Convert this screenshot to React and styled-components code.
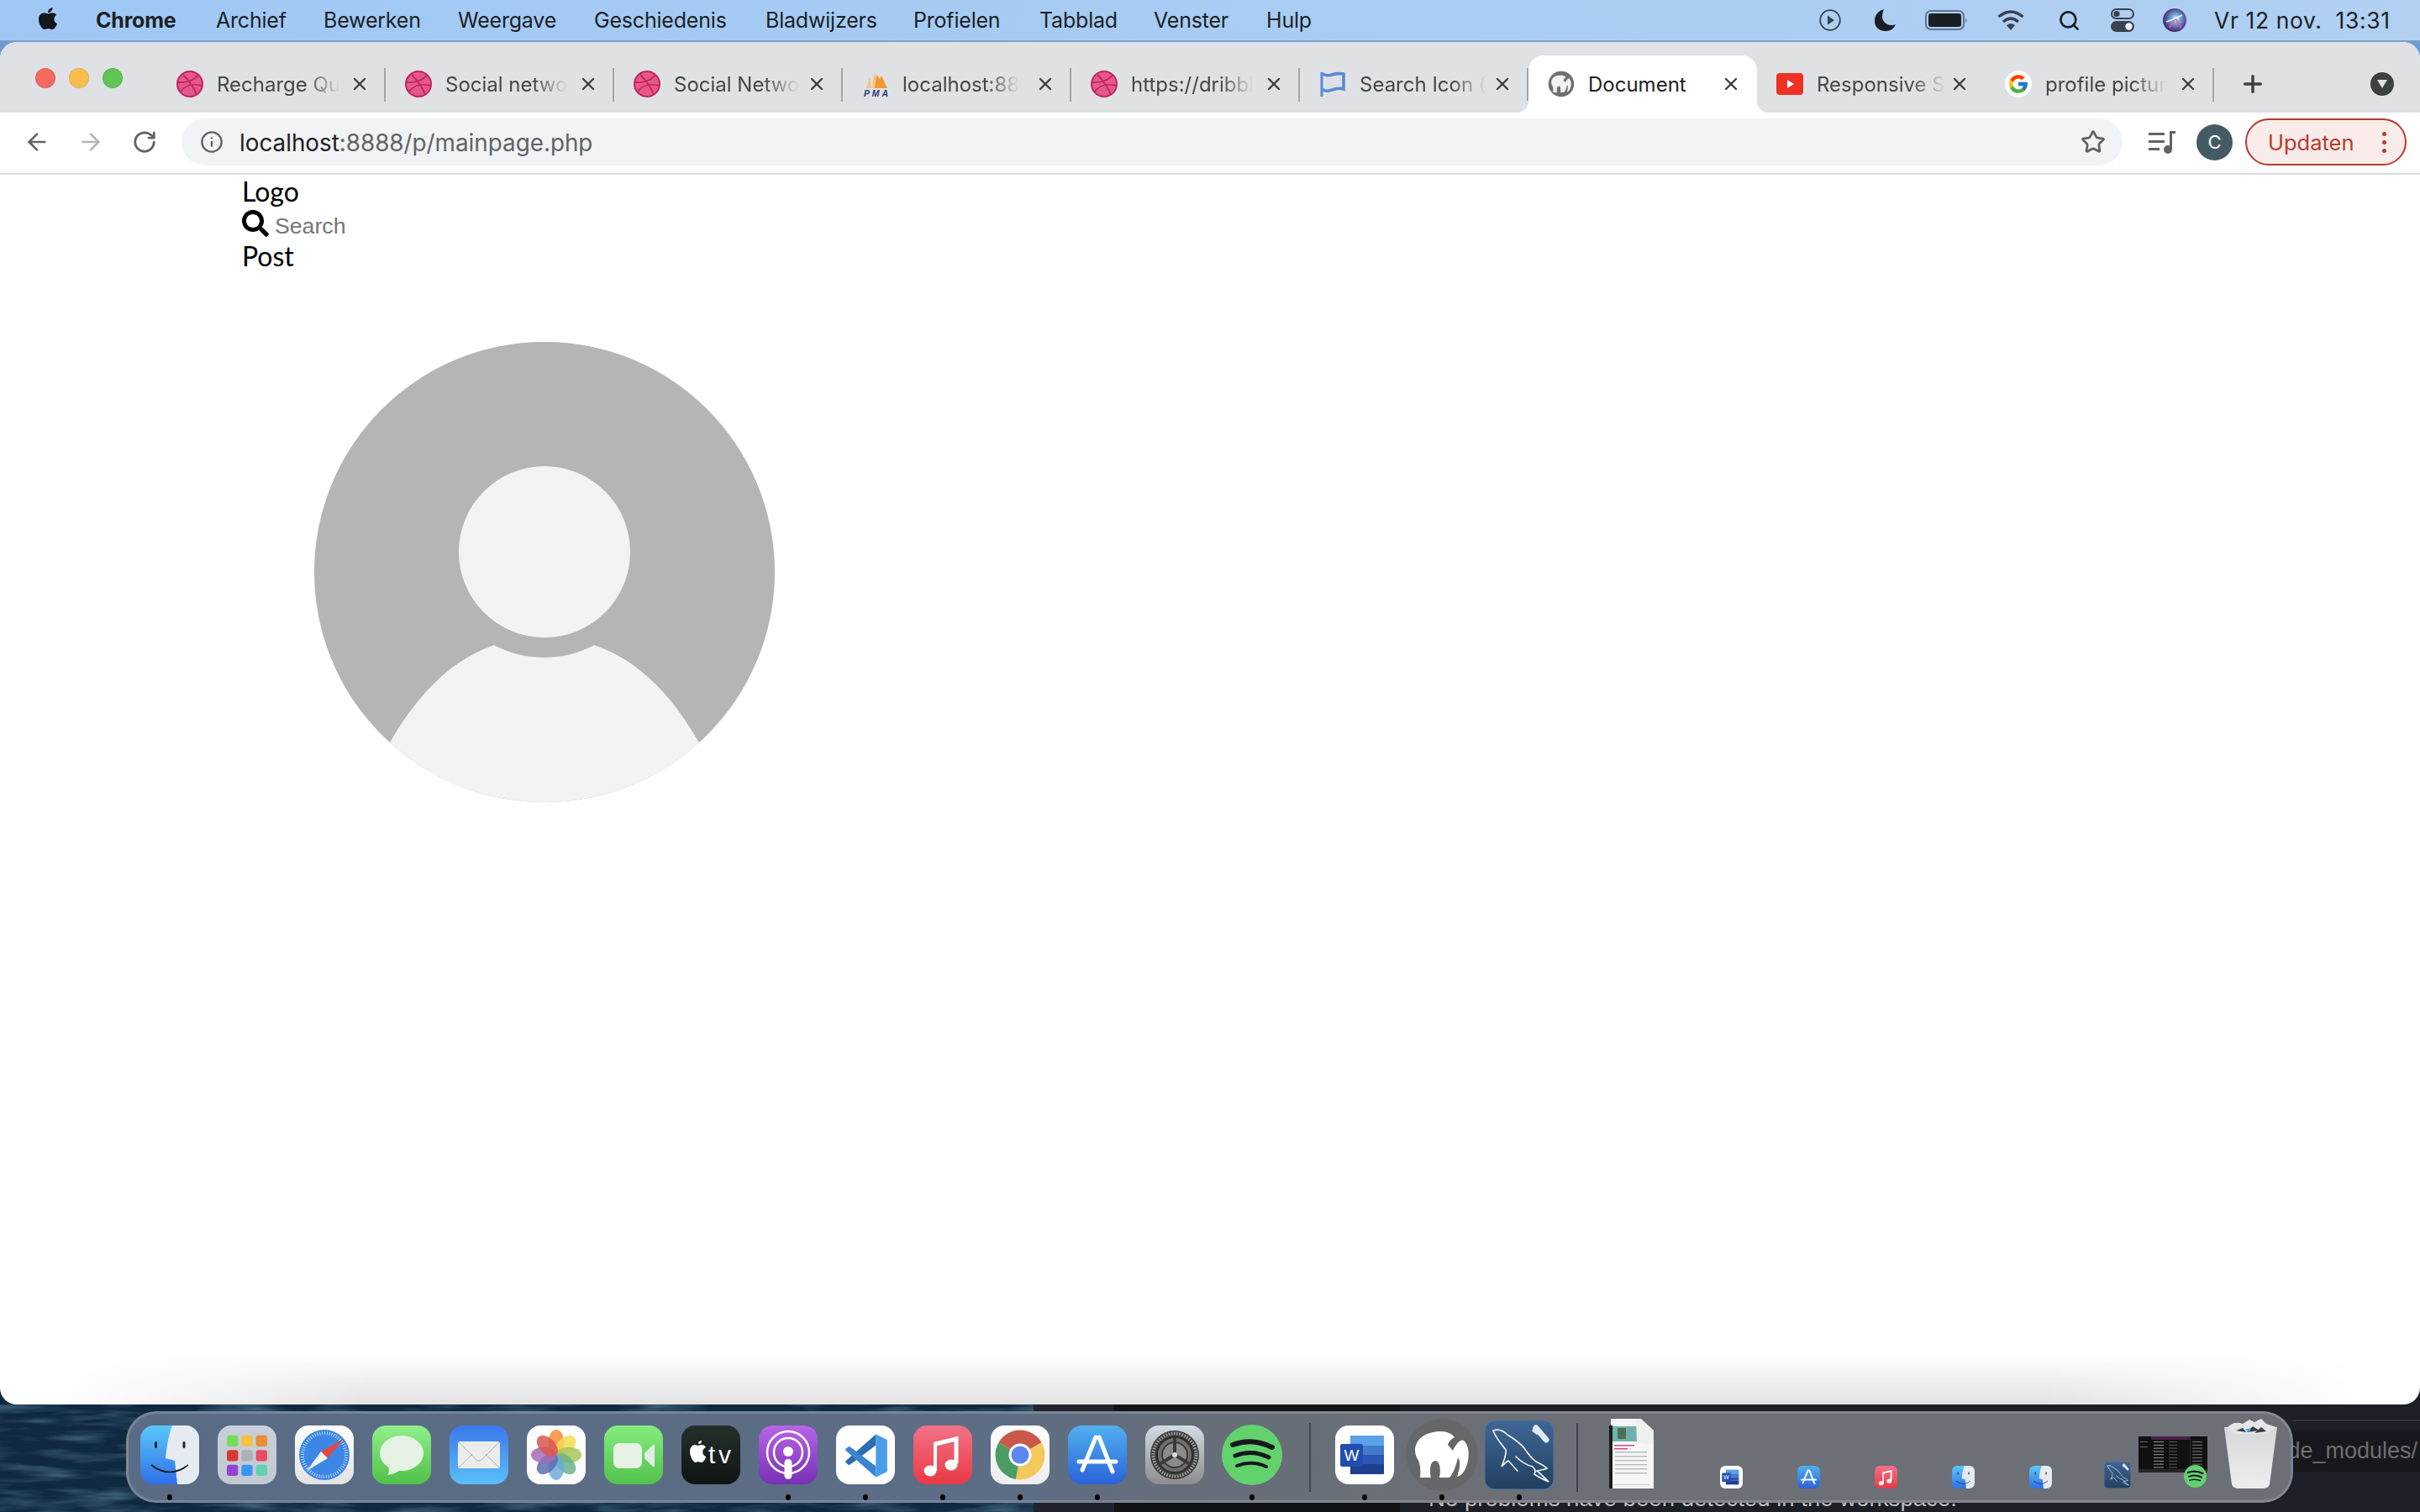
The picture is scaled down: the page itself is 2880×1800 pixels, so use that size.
import React from "react";
import styled, { createGlobalStyle } from "styled-components";
import { ArrowLeft, ArrowRight, RotateCw, Info, Star, Plus, X, Search as SearchGlass } from "lucide-react";
import { FaSearch, FaApple } from "react-icons/fa";
import { FcGoogle } from "react-icons/fc";

const Global = createGlobalStyle`
  html, body { margin: 0; padding: 0; background: #1d1f26; overflow: hidden; }
  * { box-sizing: border-box; }
`;

const SYS = `Inter, "Liberation Sans", sans-serif`;

const Desktop = styled.div`
  position: relative;
  width: 2880px;
  height: 1800px;
  overflow: hidden;
  display: flex;
  flex-direction: column;
  font-family: ${SYS};
  background:
    linear-gradient(#6d9bd3 0 100px, transparent 100px),
    linear-gradient(90deg, #0f2940 0 1230px, #20232b 1230px 1326px, #121317 1326px 1666px, #1d1f26 1666px);
`;
const SeaTexture = styled.svg`
  position: absolute;
  left: 0;
  bottom: 0;
  width: 1230px;
  height: 128px;
`;
const EditorLine = styled.div`
  position: absolute;
  left: 2729px;
  right: 0;
  top: 1690px;
  height: 2px;
  background: #32343b;
`;
const EditorPath = styled.div`
  position: absolute;
  right: 0;
  top: 1703px;
  width: 420px;
  height: 49px;
  background: #17181d;
  color: #6e6e6e;
  font: 27px/49px "Liberation Sans", sans-serif;
  text-align: right;
  padding-right: 3px;
  white-space: nowrap;
`;
const ProblemsText = styled.div`
  position: absolute;
  left: 1700px;
  top: 1769px;
  color: #bdbdbd;
  font: 27.6px/30px "Liberation Sans", sans-serif;
  white-space: nowrap;
`;

const MenuBar = styled.header`
  position: relative;
  height: 50px;
  flex: none;
  display: flex;
  align-items: center;
  padding-left: 44px;
  background: linear-gradient(90deg, #9fc8f4, #b1d0f2);
  border-bottom: 2px solid #7ba0cc;
  color: #1b1f25;
  font-size: 25px;
  letter-spacing: -0.2px;
`;
const AppleMark = styled.span`
  display: flex;
  width: 26px;
  margin-right: 44px;
  margin-top: -4px;
  svg { display: block; }
`;
const MenuItem = styled.span`
  font-weight: ${(p) => (p.$bold ? 700 : 400)};
  width: ${(p) => p.$w}px;
  white-space: nowrap;
`;
const StatusArea = styled.div`
  margin-left: auto;
  display: flex;
  align-items: center;
  height: 100%;
`;
const StatusSlot = styled.span`
  width: ${(p) => p.$w}px;
  display: flex;
  justify-content: center;
  align-items: center;
`;
const Clock = styled.span`
  width: 260px;
  padding-left: 15px;
  white-space: pre;
  font-size: 26.5px;
  letter-spacing: 0.6px;
`;

const BrowserWindow = styled.main`
  position: relative;
  height: 1622px;
  flex: none;
  display: flex;
  flex-direction: column;
  background: #fff;
  border-radius: 20px;
  overflow: hidden;
  &::after {
    content: "";
    position: absolute;
    left: 60px;
    right: 60px;
    bottom: 0;
    height: 62px;
    pointer-events: none;
    background: linear-gradient(transparent, rgba(0, 0, 0, 0.115));
    -webkit-mask-image: linear-gradient(90deg, transparent, #000 14%, #000 86%, transparent);
    mask-image: linear-gradient(90deg, transparent, #000 14%, #000 86%, transparent);
  }
`;
const TabStrip = styled.div`
  height: 84px;
  flex: none;
  background: #dfe1e5;
  display: flex;
  align-items: flex-end;
  padding-left: 42px;
`;
const Lights = styled.div`
  display: flex;
  gap: 16px;
  align-self: flex-start;
  margin: 31px 41px 0 0;
`;
const Light = styled.span`
  width: 24px;
  height: 24px;
  border-radius: 50%;
  background: ${(p) => p.$c};
  box-shadow: inset 0 0 0 1px rgba(0, 0, 0, 0.08);
`;
const Tab = styled.div`
  position: relative;
  width: 272px;
  height: 68px;
  flex: none;
  display: flex;
  align-items: center;
  padding-left: 23px;
  color: ${(p) => (p.$active ? "#202124" : "#45474a")};
  background: ${(p) => (p.$active ? "#fff" : "transparent")};
  border-radius: ${(p) => (p.$active ? "18px 18px 0 0" : "0")};
  ${(p) =>
    p.$sep &&
    `&::after {
      content: "";
      position: absolute;
      right: 0;
      top: 15px;
      width: 2px;
      height: 40px;
      background: #a3a5a9;
    }`}
  ${(p) =>
    p.$active &&
    `&::before, &::after {
      content: "";
      position: absolute;
      bottom: 0;
      width: 14px;
      height: 14px;
    }
    &::before {
      left: -14px;
      background: radial-gradient(circle at 0 0, #dfe1e5 14px, #fff 14.5px);
    }
    &::after {
      right: -14px;
      background: radial-gradient(circle at 100% 0, #dfe1e5 14px, #fff 14.5px);
    }`}
`;
const Favicon = styled.span`
  width: 32px;
  height: 32px;
  flex: none;
  display: flex;
  align-items: center;
  justify-content: center;
  svg { display: block; }
`;
const TabTitle = styled.span`
  margin: 0 0 0 16px;
  white-space: nowrap;
  font-size: 24px;
  -webkit-mask-image: ${(p) => (p.$fade ? "linear-gradient(90deg, #000 72%, transparent 100%)" : "none")};
  mask-image: ${(p) => (p.$fade ? "linear-gradient(90deg, #000 72%, transparent 100%)" : "none")};
`;
const TabClose = styled.span`
  position: absolute;
  left: 229px;
  top: 22px;
  width: 24px;
  height: 24px;
  color: #3c4043;
  svg { display: block; }
`;
const NewTab = styled.span`
  height: 68px;
  display: flex;
  align-items: center;
  margin-left: 30px;
  color: #3c4043;
`;
const TabSearch = styled.span`
  width: 28px;
  height: 28px;
  border-radius: 50%;
  background: #3c4043;
  margin: 0 31px 20px auto;
  display: flex;
  align-items: center;
  justify-content: center;
`;

const Toolbar = styled.nav`
  height: 74px;
  flex: none;
  display: flex;
  align-items: center;
  padding: 0 15px 2px 12px;
  background: #fff;
  border-bottom: 2px solid #dadce0;
`;
const NavButton = styled.span`
  width: 64px;
  display: flex;
  justify-content: center;
  color: ${(p) => (p.$off ? "#b5b7ba" : "#5f6368")};
`;
const Omnibox = styled.div`
  width: 2310px;
  height: 56px;
  margin-left: 12px;
  flex: none;
  display: flex;
  align-items: center;
  padding: 0 20px 0 22px;
  border-radius: 28px;
  background: #f1f3f4;
  color: #5f6368;
  font-size: 27.8px;
  svg { flex: none; }
`;
const UrlText = styled.span`
  margin-left: 19px;
  padding-top: 2px;
  flex: 1;
  b { font-weight: 400; color: #202124; }
`;
const MediaButton = styled.span`
  width: 46px;
  margin-left: 24px;
  display: flex;
  justify-content: center;
`;
const ProfileBadge = styled.span`
  width: 43px;
  height: 43px;
  margin-left: 18px;
  border-radius: 50%;
  background: #455a64;
  color: #fff;
  font-size: 22px;
  display: flex;
  align-items: center;
  justify-content: center;
`;
const UpdatePill = styled.span`
  width: 192px;
  height: 56px;
  margin-left: 15px;
  border: 2px solid #b93a2c;
  border-radius: 28px;
  background: #f9ecea;
  color: #b93a2c;
  font-size: 25.5px;
  display: flex;
  align-items: center;
  justify-content: space-between;
  padding: 0 22px 0 25px;
`;
const Kebab = styled.span`
  display: flex;
  flex-direction: column;
  gap: 5px;
  i { width: 5px; height: 5px; border-radius: 50%; background: #b93a2c; display: block; }
`;

const Page = styled.section`
  flex: 1;
  padding-left: 288px;
  font-family: Lato, sans-serif;
  font-size: 32px;
  line-height: 39px;
  color: #000;
`;
const SearchRow = styled.div`
  height: 38px;
  display: flex;
  align-items: center;
  gap: 7px;
`;
const SearchHint = styled.span`
  font: 26.67px/30px "Liberation Sans", sans-serif;
  color: #757575;
  margin-top: 6px;
`;
const Avatar = styled.svg`
  display: block;
  width: 600px;
  height: 600px;
  margin: 56px 0 0 60px;
`;

const Dock = styled.footer`
  position: relative;
  width: 2579px;
  height: 109px;
  margin: 8px 0 0 150px;
  padding: 14px 0 0 3px;
  display: flex;
  border: 3px solid rgba(255, 255, 255, 0.17);
  border-radius: 36px;
  background: linear-gradient(90deg, #5a6c85 0, #5c6d85 1030px, #666e7a 1260px, #6c6f76 1600px, #6c6f76 100%);
`;
const DockSlot = styled.div`
  position: relative;
  width: ${(p) => p.$w || 92}px;
  margin-right: ${(p) => p.$mr || 0}px;
  margin-left: ${(p) => p.$ml || 0}px;
  flex: none;
  display: flex;
  flex-direction: column;
  align-items: center;
`;
const IconWell = styled.div`
  height: ${(p) => (p.$tall ? 75 : 70)}px;
  display: flex;
  align-items: ${(p) => (p.$tall ? "flex-end" : "center")};
  justify-content: center;
  svg { display: block; flex: none; }
`;
const RunDot = styled.i`
  display: block;
  width: 6px;
  height: 7px;
  margin-top: 12px;
  border-radius: 50%;
  background: #000;
`;
const DockRule = styled.div`
  width: 42px;
  flex: none;
  display: flex;
  justify-content: center;
  padding-left: 4px;
  &::before {
    content: "";
    width: 2px;
    height: 82px;
    background: #3f434c;
    margin-top: -3px;
  }
`;
const MiniWindow = styled.svg`
  position: absolute;
  left: -21px;
  top: 13px;
  width: 82px;
  height: 43px;
`;

const Squircle = ({ id, from, to, size = 70, children, fill }) => (
  <svg width={size} height={size} viewBox="0 0 70 70">
    <defs>
      <linearGradient id={id} x1="0" y1="0" x2="0" y2="1">
        <stop offset="0" stopColor={from} />
        <stop offset="1" stopColor={to} />
      </linearGradient>
    </defs>
    <rect width="70" height="70" rx="16" fill={fill || `url(#${id})`} />
    {children}
  </svg>
);

const Finder = ({ size, id = "fi" }) => (
  <Squircle id={id} from="#5ac8fa" to="#2f6fe8" size={size}>
    <path d="M38 0H54a16 16 0 0 1 16 16V54a16 16 0 0 1-16 16H44L41 42 30 39Q32 16 38 0Z" fill="#e6eaf1" />
    <rect x="17" y="19" width="3" height="8" rx="1.5" fill="#20262f" />
    <rect x="50.5" y="19" width="3" height="8" rx="1.5" fill="#20262f" />
    <path d="M13 47Q35 64 57 47" stroke="#15181d" strokeWidth="1.6" fill="none" />
  </Squircle>
);
const Launchpad = () => {
  const c = ["#75dc59", "#f6c241", "#e88e35", "#d63b2f", "#aab2b8", "#ea4c63", "#9345d2", "#3b94f5", "#64d1ae"];
  return (
    <Squircle id="lp" from="#c8cfd9" to="#c2c9d3">
      {c.map((f, i) => (
        <rect key={f} x={11 + (i % 3) * 17.3} y={11.7 + Math.floor(i / 3) * 17.5} width="13.4" height="13.4" rx="3" fill={f} />
      ))}
    </Squircle>
  );
};
const Safari = () => (
  <Squircle id="sa" from="#ffffff" to="#e2e2e2">
    <circle cx="35" cy="35" r="30" fill="#3c87e6" />
    <circle cx="35" cy="35" r="26" fill="none" stroke="#dfeeff" strokeWidth="4" strokeDasharray="0.8 2.1" />
    <polygon points="58,16 31,31 39,39" fill="#e5483a" />
    <polygon points="14,54 31,31 39,39" fill="#f4f4f4" />
  </Squircle>
);
const Messages = () => (
  <Squircle id="me" from="#8ff08a" to="#50c148">
    <ellipse cx="35" cy="33" rx="26" ry="21" fill="#e6f2e4" />
    <path d="M19 48Q21 56 18 59Q27 58 33 53Z" fill="#e6f2e4" />
  </Squircle>
);
const Mail = () => (
  <Squircle id="ma" from="#3a78ec" to="#5ac0f9">
    <rect x="10" y="19" width="50" height="32" rx="2.5" fill="#ececec" />
    <path d="M11 20 32 41Q35 43 38 41L59 20M11 50 27 34M59 50 43 34" fill="none" stroke="#b4b4b4" strokeWidth="1" />
  </Squircle>
);
const Photos = () => {
  const c = ["#ee8f38", "#f5dc55", "#a9c75a", "#6bb38a", "#6fa9db", "#5e6cb0", "#a66ab5", "#d9564f"];
  return (
    <Squircle id="ph" from="#ffffff" to="#fbfbfb">
      {c.map((f, i) => (
        <ellipse key={f} cx="35" cy="20" rx="9.5" ry="15" fill={f} opacity="0.85" transform={`rotate(${i * 45} 35 35)`} />
      ))}
    </Squircle>
  );
};
const FaceTime = () => (
  <Squircle id="ft" from="#86ec7f" to="#52c24a">
    <rect x="11" y="21" width="34" height="30" rx="7" fill="#e8f1e6" />
    <path d="M48 33 58 23Q60 22 60 25V47Q60 50 58 49L48 39Z" fill="#e0ede0" />
  </Squircle>
);
const AppleTv = () => (
  <Squircle id="tv" from="#24302c" to="#101413">
    <path d="M20 22c2 0 4-1 4-4-2 0-4 1-4 4zm4 1c-2 0-3 1-4 1-1 0-3-1-4-1-3 0-6 3-6 8 0 6 4 13 7 13 1 0 2-1 3-1s2 1 4 1c2 0 5-5 5-7-5-2-5-9 0-11-1-2-3-3-5-3z" fill="#fff" />
    <text x="32" y="45" fill="#fff" fontFamily="Liberation Sans, sans-serif" fontSize="30" textLength="27">tv</text>
  </Squircle>
);
const Podcasts = () => (
  <Squircle id="po" from="#b765e8" to="#7630b6">
    <circle cx="35" cy="32" r="25" fill="none" stroke="#fff" strokeWidth="2.5" />
    <circle cx="35" cy="32" r="17" fill="none" stroke="#fff" strokeWidth="2.5" />
    <circle cx="35" cy="31" r="6" fill="#fff" />
    <rect x="30.5" y="40" width="9" height="24" rx="4.5" fill="#fff" />
  </Squircle>
);
const VSCode = () => (
  <Squircle id="vs" fill="#fff" from="#fff" to="#fff">
    <g transform="translate(9 9) scale(0.54)">
      <polygon points="71,3 71,27 21,65 12,71 4,65 4,62" fill="#2b6cb3" />
      <polygon points="71,97 71,73 21,35 12,29 4,35 4,38" fill="#3a84d2" />
      <polygon points="71,3 96,15 96,85 71,97" fill="#4a9bea" />
    </g>
  </Squircle>
);
const Music = ({ size, id = "mu" }) => (
  <Squircle id={id} from="#f27289" to="#e93a44" size={size}>
    <path d="M26 22 51 16V45" fill="none" stroke="#fff" strokeWidth="5" />
    <path d="M26 20V54" stroke="#fff" strokeWidth="4" />
    <ellipse cx="20" cy="54" rx="7.5" ry="6.5" fill="#fff" />
    <ellipse cx="45" cy="47" rx="7.5" ry="6.5" fill="#fff" />
  </Squircle>
);
const ChromeApp = () => (
  <Squircle id="ch" from="#ffffff" to="#eeeeee">
    <path d="M35 35 9.5 20.2A29.5 29.5 0 0 1 60.5 20.2Z" fill="#c9594a" />
    <path d="M35 35 60.5 20.2A29.5 29.5 0 0 1 30 64Z" fill="#f4c95c" />
    <path d="M35 35 30 64A29.5 29.5 0 0 1 9.5 20.2Z" fill="#4b9d63" />
    <circle cx="35" cy="35" r="13.5" fill="#fff" />
    <circle cx="35" cy="35" r="10.5" fill="#5d87ee" />
  </Squircle>
);
const AppStore = ({ size, id = "as" }) => (
  <Squircle id={id} from="#52b0f0" to="#2a62d8" size={size}>
    <g stroke="#fff" strokeLinecap="round" fill="none">
      <path d="M33 14 17 53M37 14 53 55" strokeWidth="5" />
      <path d="M13 43H57" strokeWidth="5" />
    </g>
  </Squircle>
);
const Settings = () => (
  <Squircle id="se" from="#d0dde3" to="#8c8c8c">
    <circle cx="35" cy="35" r="29" fill="#3a3a3a" />
    <circle cx="35" cy="35" r="25.5" fill="none" stroke="#a2a2a2" strokeWidth="4" strokeDasharray="1.6 1.6" />
    <circle cx="35" cy="35" r="21" fill="#6e6e6e" stroke="#2e2e2e" strokeWidth="2" />
    <circle cx="35" cy="35" r="15" fill="#8b8b8b" stroke="#3a3a3a" strokeWidth="2" />
    <path d="M35 35V15M35 35 17 46M35 35 53 46" stroke="#3a3a3a" strokeWidth="4" />
    <circle cx="35" cy="35" r="3" fill="#ddd" />
  </Squircle>
);
const Spotify = ({ size = 72 }) => (
  <svg width={size} height={size} viewBox="0 0 72 72">
    <circle cx="36" cy="36" r="36" fill="#62d26f" />
    <g fill="none" stroke="#15181a" strokeLinecap="round">
      <path d="M13 24Q36 15 60 27" strokeWidth="6" />
      <path d="M16 37Q36 29 56 39" strokeWidth="5" />
      <path d="M18 49Q36 42 53 50" strokeWidth="4" />
    </g>
  </svg>
);
const Word = ({ size }) => (
  <Squircle id={`wd${size || 70}`} fill="#fff" from="#fff" to="#fff" size={size}>
    <rect x="18" y="12" width="40" height="12" fill="#5ba0e8" />
    <rect x="18" y="24" width="40" height="11" fill="#4179cf" />
    <rect x="18" y="35" width="40" height="11" fill="#2a57b3" />
    <rect x="18" y="46" width="40" height="12" fill="#1f3f8f" />
    <rect x="6" y="22" width="27" height="27" rx="2" fill="#1f4eb0" />
    <text x="19.5" y="42" fill="#fff" fontFamily="Liberation Sans, sans-serif" fontSize="19" textAnchor="middle">W</text>
  </Squircle>
);
const Elephant = ({ fill = "#fff" }) => (
  <path
    fill={fill}
    d="M11 38C11 24 24 15 42 15C49 15 55 18 58 22C54 24 51 27 50 31C52 33 54 36 56 38C60 30 65 24 69 26C74 30 76 40 74 50C72 60 67 68 61 69C64 60 66 52 62 46C60 56 56 66 52 70L40 70C42 62 41 50 35 50C29 50 28 62 30 70L17 70C18 62 17 52 14 48C12 44 11 41 11 38Z"
  />
);
const Mamp = () => (
  <svg width="86" height="86" viewBox="0 0 86 86">
    <circle cx="43" cy="43" r="43" fill="#666768" />
    <Elephant />
  </svg>
);
const Workbench = ({ size = 84, id = "wb" }) => (
  <svg width={size} height={size} viewBox="0 0 84 84">
    <defs>
      <linearGradient id={id} x1="0" y1="0" x2="0" y2="1">
        <stop offset="0" stopColor="#3f6795" />
        <stop offset="1" stopColor="#22405f" />
      </linearGradient>
    </defs>
    <rect x="1" y="1" width="82" height="82" rx="12" fill={`url(#${id})`} stroke="#4f77a5" />
    <g fill="none" stroke="#eaf2fa" strokeWidth="1.7" strokeLinecap="round">
      <path d="M11 13C17 11 23 13 28 18C36 23 43 28 48 34C52 40 56 46 62 50C68 53 72 55 75 58C71 60 67 60 63 61C68 65 72 69 77 74C72 72 66 69 60 65C62 62 61 59 58 56C50 54 44 50 38 44" />
      <path d="M11 13C14 22 21 29 26 36C27 42 24 48 21 56C24 53 27 50 29 49C33 53 36 57 40 61" />
    </g>
    <path d="M62 10 74 24" stroke="#dfeaf5" strokeWidth="7" strokeLinecap="round" />
    <path d="M62 7 59 13 64 17" fill="none" stroke="#dfeaf5" strokeWidth="3" />
  </svg>
);
const DocThumb = () => (
  <svg width="55" height="83" viewBox="0 0 55 83">
    <path d="M2 0H36L53 16V83H2Z" fill="#f6f6f6" />
    <rect x="0" y="8" width="4" height="75" fill="#1b1b1b" />
    <rect x="4" y="9" width="45" height="18" fill="#6eb2ad" />
    <rect x="10" y="11" width="10" height="13" fill="#4d6f55" />
    <path d="M32 0 38 0 53 14V30Q44 31 33 28Z" fill="#eef0ee" />
    <rect x="6" y="31" width="24" height="1.5" fill="#d1478c" />
    <rect x="6" y="35" width="16" height="1.5" fill="#d1478c" />
    {[39, 44, 49, 54, 59, 64].map((y) => (
      <rect key={y} x="7" y={y} width="38" height="1.5" fill="#b7bcc2" />
    ))}
    <rect x="6" y="78" width="42" height="1" fill="#c9c9c9" />
  </svg>
);
const Trash = () => (
  <svg width="63" height="83" viewBox="0 0 63 83">
    <defs>
      <linearGradient id="tr" x1="0" y1="0" x2="0" y2="1">
        <stop offset="0" stopColor="#d6d7d9" />
        <stop offset="1" stopColor="#eeeeee" />
      </linearGradient>
    </defs>
    <path d="M0 10 63 10 54 78Q53 83 45 83H18Q10 83 9 78Z" fill="url(#tr)" />
    <path d="M4 10Q12 2 22 6L30 1 36 4 44 0 50 6 62 10 50 18H10Z" fill="#e6e6e6" />
    <path d="M14 14 22 11 26 16ZM27 16 34 9 42 14ZM36 17 44 10 50 15Z" fill="#38404c" />
    <path d="M24 13 32 11 30 16Z" fill="#4fb0d8" />
  </svg>
);
const MiniSpotify = styled.span`
  position: absolute;
  left: 33px;
  top: 47px;
  width: 27px;
  height: 27px;
  svg { display: block; }
`;
const Thumb = () => (
  <MiniWindow viewBox="0 0 82 43">
    <rect width="82" height="43" fill="#111" />
    <rect x="15" width="47" height="4" fill="#4a1f46" />
    <rect x="61" width="1" height="43" fill="#2a2a2a" />
    {Array.from({ length: 9 }).map((_, i) => (
      <g key={i}>
        <rect x="18" y={6 + i * 3.8} width="12" height="1" fill="#9a9a9a" />
        <rect x="36" y={6 + i * 3.8} width="10" height="1" fill="#555" />
        <rect x="64" y={6 + i * 3.8} width="12" height="1" fill="#777" />
      </g>
    ))}
    <rect x="2" y="6" width="9" height="1" fill="#666" />
    <rect x="2" y="12" width="9" height="1" fill="#666" />
    <rect x="0" y="39" width="82" height="4" fill="#262626" />
  </MiniWindow>
);

const Dribbble = () => (
  <svg width="32" height="32" viewBox="0 0 32 32">
    <circle cx="16" cy="16" r="15" fill="#e4598a" stroke="#c32361" strokeWidth="2" />
    <path d="M8 5C14 11 21 20 24 29M2 14C11 15 21 12 26 5M5 25C10 18 19 15 30 18" fill="none" stroke="#c32361" strokeWidth="1.8" />
  </svg>
);
const Pma = () => (
  <svg width="32" height="32" viewBox="0 0 32 32">
    <path d="M5 21 9 8 11 21ZM12 21 15 0 19 21Z" fill="#f8c37c" />
    <path d="M15 21 17 5 21 10 23 6 30 21Z" fill="#f29a2e" />
    <text x="2" y="31" fill="#2b3a75" fontFamily="Liberation Sans, sans-serif" fontStyle="italic" fontWeight="700" fontSize="10.5" textLength="29">PMA</text>
  </svg>
);
const FlagIcon = () => (
  <svg width="32" height="32" viewBox="0 0 32 32">
    <path d="M3 2V31" stroke="#5b8ad6" strokeWidth="3" fill="none" />
    <path d="M4 4Q9 7 15 5T29 4V22Q23 20 15 23T4 22" fill="none" stroke="#5b8ad6" strokeWidth="3.6" />
  </svg>
);
const MampFav = () => (
  <svg width="32" height="32" viewBox="0 0 86 86">
    <circle cx="43" cy="43" r="41" fill="#6e6f70" />
    <Elephant fill="#f1f1f1" />
  </svg>
);
const YouTube = () => (
  <svg width="32" height="32" viewBox="0 0 32 32">
    <rect x="0" y="3" width="32" height="26" rx="4" fill="#ef3124" />
    <path d="M13 11 21 16 13 21Z" fill="#fff" />
  </svg>
);
const GoogleFav = () => (
  <svg width="32" height="32" viewBox="0 0 32 32">
    <circle cx="16" cy="16" r="16" fill="#fff" />
    <g transform="translate(3 3)"><FcGoogle size={26} /></g>
  </svg>
);

const PlayStatus = () => (
  <svg width="26" height="26" viewBox="0 0 26 26">
    <circle cx="13" cy="13" r="11.8" fill="none" stroke="#39424d" strokeWidth="1.8" />
    <path d="M10 7.5 18 13 10 18.5Z" fill="#39424d" />
  </svg>
);
const Moon = () => (
  <svg width="26" height="28" viewBox="0 0 26 28">
    <path d="M11 1C4 3 0 8 0 15 0 23 6 27 13 27 19 27 23 24 25 19 17 22 9 17 9 10 9 7 10 3 11 1Z" fill="#1a1e23" />
  </svg>
);
const Battery = () => (
  <svg width="52" height="24" viewBox="0 0 52 24">
    <rect x="1" y="1" width="45" height="22" rx="6" fill="none" stroke="#5e7690" strokeWidth="2" />
    <rect x="4" y="4" width="39" height="16" rx="3" fill="#1a1e23" />
    <path d="M48 9Q51 12 48 15Z" fill="#5e7690" />
  </svg>
);
const Wifi = () => (
  <svg width="32" height="26" viewBox="0 0 32 26">
    <g fill="none" stroke="#39424d" strokeWidth="3.2">
      <path d="M1.5 9Q16 -3 30.5 9" />
      <path d="M7 15Q16 7 25 15" />
    </g>
    <path d="M11 19Q16 15 21 19L16 25Z" fill="#39424d" />
  </svg>
);
const ControlCenter = () => (
  <svg width="28" height="28" viewBox="0 0 28 28">
    <rect x="1" y="1" width="26" height="11" rx="5.5" fill="none" stroke="#39424d" strokeWidth="2" />
    <circle cx="7" cy="6.5" r="3.6" fill="#39424d" />
    <rect x="0" y="15" width="28" height="13" rx="6.5" fill="#39424d" />
    <circle cx="21.5" cy="21.5" r="4.2" fill="#eaf1f8" />
  </svg>
);
const Siri = () => (
  <svg width="28" height="28" viewBox="0 0 28 28">
    <defs>
      <radialGradient id="si" cx="0.55" cy="0.45" r="0.6">
        <stop offset="0" stopColor="#ffffff" />
        <stop offset="0.3" stopColor="#6fb2d8" />
        <stop offset="0.7" stopColor="#5b4a9b" />
        <stop offset="1" stopColor="#2f2a52" />
      </radialGradient>
    </defs>
    <circle cx="14" cy="14" r="14" fill="url(#si)" />
    <path d="M15 12 8 23M15 12 22 23" stroke="#e8589c" strokeWidth="1.6" />
    <path d="M15 12 23 8M15 12 4 16" stroke="#e9f6ff" strokeWidth="1.4" />
  </svg>
);
const MediaQueue = () => (
  <svg width="32" height="28" viewBox="0 0 32 28">
    <g fill="#5f6368">
      <rect x="0" y="3" width="19" height="3" />
      <rect x="0" y="12" width="19" height="3" />
      <rect x="0" y="21" width="13" height="3" />
      <rect x="25" y="1" width="3" height="22" />
      <rect x="25" y="1" width="7" height="3" />
      <circle cx="23" cy="23" r="5" />
    </g>
  </svg>
);

const menu = [
  ["Archief", 128],
  ["Bewerken", 160],
  ["Weergave", 162],
  ["Geschiedenis", 204],
  ["Bladwijzers", 176],
  ["Profielen", 150],
  ["Tabblad", 136],
  ["Venster", 134],
  ["Hulp", 80],
];
const status = [
  [65, <PlayStatus key="p" />],
  [67, <Moon key="m" />],
  [79, <Battery key="b" />],
  [73, <Wifi key="w" />],
  [66, <SearchGlass key="s" size={27} color="#1a1e23" strokeWidth={2.4} />],
  [61, <ControlCenter key="c" />],
  [64, <Siri key="r" />],
];
const tabs = [
  [<Dribbble key="a" />, "Recharge Qu", true],
  [<Dribbble key="a" />, "Social netwo", true],
  [<Dribbble key="a" />, "Social Netwo", true],
  [<Pma key="a" />, "localhost:88", true],
  [<Dribbble key="a" />, "https://dribbl", true],
  [<FlagIcon key="a" />, "Search Icon (", true],
  [<MampFav key="a" />, "Document", false, true],
  [<YouTube key="a" />, "Responsive S", true],
  [<GoogleFav key="a" />, "profile pictur", true],
];
const seps = [true, true, true, true, true, true, false, false, true];

export default function App() {
  return (
    <Desktop>
      <Global />
      <SeaTexture aria-hidden="true">
        <filter id="sea">
          <feTurbulence type="fractalNoise" baseFrequency="0.012 0.09" numOctaves="3" seed="4" />
          <feColorMatrix values="0 0 0 0 0.13  0 0 0 0 0.27  0 0 0 0 0.39  1.3 0 0 0 -0.55" />
        </filter>
        <rect width="1230" height="128" filter="url(#sea)" />
      </SeaTexture>
      <EditorLine />
      <EditorPath>node_modules/</EditorPath>
      <ProblemsText>No problems have been detected in the workspace.</ProblemsText>

      <MenuBar>
        <AppleMark><FaApple size={30} color="#14181d" /></AppleMark>
        <MenuItem $bold $w={143}>Chrome</MenuItem>
        {menu.map(([t, w]) => (
          <MenuItem key={t} $w={w}>{t}</MenuItem>
        ))}
        <StatusArea>
          {status.map(([w, icon], i) => (
            <StatusSlot key={i} $w={w}>{icon}</StatusSlot>
          ))}
          <Clock>{"Vr 12 nov.  13:31"}</Clock>
        </StatusArea>
      </MenuBar>

      <BrowserWindow>
        <TabStrip>
          <Lights>
            <Light $c="#f26b5e" />
            <Light $c="#f7be4f" />
            <Light $c="#61c554" />
          </Lights>
          {tabs.map(([icon, title, fade, active], i) => (
            <Tab key={i} $active={active} $sep={seps[i]}>
              <Favicon>{icon}</Favicon>
              <TabTitle $fade={fade}>{title}</TabTitle>
              <TabClose><X size={24} strokeWidth={2.4} /></TabClose>
            </Tab>
          ))}
          <NewTab><Plus size={32} strokeWidth={2.6} /></NewTab>
          <TabSearch>
            <svg width="14" height="10" viewBox="0 0 14 10"><path d="M1 0H13L7 10Z" fill="#dfe1e5" /></svg>
          </TabSearch>
        </TabStrip>

        <Toolbar>
          <NavButton><ArrowLeft size={32} strokeWidth={2} /></NavButton>
          <NavButton $off><ArrowRight size={32} strokeWidth={2} /></NavButton>
          <NavButton><RotateCw size={30} strokeWidth={2.2} /></NavButton>
          <Omnibox>
            <Info size={28} strokeWidth={2} />
            <UrlText><b>localhost</b>:8888/p/mainpage.php</UrlText>
            <Star size={30} strokeWidth={2.2} />
          </Omnibox>
          <MediaButton><MediaQueue /></MediaButton>
          <ProfileBadge>C</ProfileBadge>
          <UpdatePill>
            Updaten
            <Kebab><i /><i /><i /></Kebab>
          </UpdatePill>
        </Toolbar>

        <Page>
          <div>Logo</div>
          <SearchRow>
            <FaSearch size={32} />
            <SearchHint>Search</SearchHint>
          </SearchRow>
          <div>Post</div>
          <Avatar viewBox="0 0 600 600" role="img" aria-label="Profile picture">
            <defs>
              <clipPath id="disc"><circle cx="300" cy="301" r="274" /></clipPath>
            </defs>
            <circle cx="300" cy="301" r="274" fill="#b5b5b5" />
            <circle cx="300" cy="277" r="102" fill="#f3f3f3" />
            <path
              clipPath="url(#disc)"
              fill="#f3f3f3"
              d="M116 504C150 445 190 405 240 388A127 127 0 0 0 359 388C410 405 450 445 484 504L500 600H100Z"
            />
          </Avatar>
        </Page>
      </BrowserWindow>

      <Dock>
        <DockSlot><IconWell><Finder /></IconWell><RunDot /></DockSlot>
        <DockSlot><IconWell><Launchpad /></IconWell></DockSlot>
        <DockSlot><IconWell><Safari /></IconWell></DockSlot>
        <DockSlot><IconWell><Messages /></IconWell></DockSlot>
        <DockSlot><IconWell><Mail /></IconWell></DockSlot>
        <DockSlot><IconWell><Photos /></IconWell></DockSlot>
        <DockSlot><IconWell><FaceTime /></IconWell></DockSlot>
        <DockSlot><IconWell><AppleTv /></IconWell></DockSlot>
        <DockSlot><IconWell><Podcasts /></IconWell><RunDot /></DockSlot>
        <DockSlot><IconWell><VSCode /></IconWell><RunDot /></DockSlot>
        <DockSlot><IconWell><Music /></IconWell><RunDot /></DockSlot>
        <DockSlot><IconWell><ChromeApp /></IconWell><RunDot /></DockSlot>
        <DockSlot><IconWell><AppStore /></IconWell><RunDot /></DockSlot>
        <DockSlot><IconWell><Settings /></IconWell></DockSlot>
        <DockSlot><IconWell><Spotify /></IconWell><RunDot /></DockSlot>
        <DockRule />
        <DockSlot><IconWell><Word /></IconWell><RunDot /></DockSlot>
        <DockSlot><IconWell><Mamp /></IconWell><RunDot /></DockSlot>
        <DockSlot><IconWell><Workbench /></IconWell><RunDot /></DockSlot>
        <DockRule />
        <DockSlot $mr={26}><IconWell $tall><DocThumb /></IconWell></DockSlot>
        <DockSlot><IconWell $tall><Word size={27} /></IconWell></DockSlot>
        <DockSlot><IconWell $tall><AppStore size={27} id="as2" /></IconWell></DockSlot>
        <DockSlot><IconWell $tall><Music size={27} id="mu2" /></IconWell></DockSlot>
        <DockSlot><IconWell $tall><Finder size={27} id="fi2" /></IconWell></DockSlot>
        <DockSlot><IconWell $tall><Finder size={27} id="fi3" /></IconWell></DockSlot>
        <DockSlot><IconWell $tall><Workbench size={32} id="wb2" /></IconWell></DockSlot>
        <DockSlot>
          <Thumb />
          <MiniSpotify><Spotify size={27} /></MiniSpotify>
        </DockSlot>
        <DockSlot $w={63} $ml={-11}><IconWell $tall><Trash /></IconWell></DockSlot>
      </Dock>
    </Desktop>
  );
}
